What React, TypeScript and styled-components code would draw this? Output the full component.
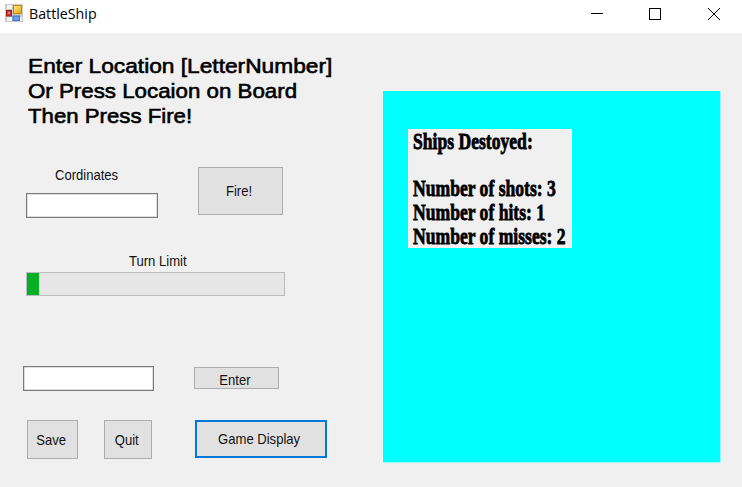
import React from "react";
import styled, { createGlobalStyle } from "styled-components";

const GlobalStyle = createGlobalStyle`
  * { box-sizing: border-box; }
  html, body { margin: 0; padding: 0; background: #f0f0f0; }
  button, input { font: inherit; border-radius: 0; margin: 0; padding: 0; }
`;

const Window = styled.div`
  width: 742px;
  height: 487px;
  display: flex;
  flex-direction: column;
  overflow: hidden;
  background: #f0f0f0;
  color: #111;
  font-family: "Liberation Sans", Arial, sans-serif;
  font-size: 15px;
  line-height: 17px;
`;

const TitleBar = styled.header`
  height: 33px;
  flex: none;
  display: flex;
  align-items: flex-start;
  background: #fff;
`;

const AppIcon = styled.svg`
  flex: none;
  margin: 4px 6px 0 5px;
`;

const Title = styled.span`
  flex: 1;
  margin-top: 4px;
  color: #000;
  font-family: "Open Sans", "Noto Sans", sans-serif;
  font-size: 14.3px;
  line-height: 20px;
  transform: scaleX(0.995);
  transform-origin: left;
`;

const Controls = styled.div`
  display: flex;
  flex: none;
`;

const ControlIcon = styled.svg`
  width: 58px;
  height: 28px;
  fill: none;
  stroke: #000;
`;

const Content = styled.main`
  display: flex;
  flex: 1;
`;

const ControlPanel = styled.section`
  width: 383px;
  flex: none;
  padding: 20px 0 0 23px;
`;

const Instructions = styled.h1`
  margin: 0 0 0 5px;
  color: #000;
  font-size: 20.5px;
  font-weight: 400;
  line-height: 25px;
  white-space: pre;
  -webkit-text-stroke: 0.6px #000;
`;

const InstructionLine = styled.span<{ $stretch: number }>`
  display: block;
  transform: scaleX(${(p) => p.$stretch});
  transform-origin: left;
`;

const Row = styled.div<{ $top: number; $indent?: number; $gap: number }>`
  display: flex;
  align-items: flex-start;
  gap: ${(p) => p.$gap}px;
  margin: ${(p) => p.$top}px 0 0 ${(p) => p.$indent ?? 0}px;
`;

const Field = styled.div`
  display: flex;
  flex-direction: column;
`;

const Caption = styled.span<{ $indent: number }>`
  margin-left: ${(p) => p.$indent}px;
  white-space: nowrap;
  transform: scaleX(0.87);
  transform-origin: left;
`;

const TextInput = styled.input<{ $w: number; $top?: number }>`
  display: block;
  width: ${(p) => p.$w}px;
  height: 25px;
  margin-top: ${(p) => p.$top ?? 0}px;
  background: #fff;
  border: 1px solid #7c7c7c;
  box-shadow: inset 0 0 0 0.5px #bbb;
  outline: none;
`;

const Button = styled.button<{ $w: number; $h: number; $top?: number; $focused?: boolean }>`
  display: flex;
  align-items: center;
  justify-content: center;
  width: ${(p) => p.$w}px;
  height: ${(p) => p.$h}px;
  margin-top: ${(p) => p.$top ?? 0}px;
  color: #111;
  background: #e1e1e1;
  border: ${(p) => (p.$focused ? "2px solid #0078d7" : "1px solid #adadad")};
`;

const ButtonLabel = styled.span<{ $shift?: number }>`
  white-space: nowrap;
  margin-top: ${(p) => p.$shift ?? 0}px;
  margin-right: 3px;
  transform: scaleX(0.87);
`;

const Progress = styled.div`
  width: 259px;
  height: 24px;
  margin: 3px 0 0 3px;
  background: #e6e6e6;
  border: 1px solid #bcbcbc;
`;

const ProgressFill = styled.div`
  width: 12px;
  height: 100%;
  background: #06b025;
`;

const Board = styled.section`
  width: 338px;
  height: 372px;
  margin-top: 58px;
  padding: 38px 0 0 25px;
  background: #00ffff;
  border: solid #a0f8f8;
  border-width: 0 1px 1px 0;
`;

const Stats = styled.div`
  width: 164px;
  height: 119px;
  padding-left: 5px;
  background: #f0f0f0;
`;

const StatLine = styled.div`
  height: 23.7px;
  color: #000;
  font-family: "Liberation Serif", "Times New Roman", serif;
  font-size: 24px;
  font-weight: 700;
  line-height: 24px;
  white-space: pre;
  -webkit-text-stroke: 0.8px #000;
  transform: scaleX(0.733);
  transform-origin: left;
`;

const stats = ["Ships Destoyed:", "", "Number of shots: 3", "Number of hits: 1", "Number of misses: 2"];

function FormIcon() {
  return (
    <AppIcon width="18" height="18" viewBox="0 0 18 18">
      <defs>
        <linearGradient id="gold" x2="1" y2="1">
          <stop stopColor="#ffe88a" />
          <stop offset="1" stopColor="#e5a800" />
        </linearGradient>
      </defs>
      <rect width="18" height="18" fill="#c9c9c9" />
      <path d="M2 1h5v4H2zM2 13h5v4H2zM15 13h2v4h-2z" fill="#f4f4f4" />
      <rect x="1.5" y="6.5" width="5" height="5.5" fill="#c43a32" stroke="#9d1e1a" />
      <rect x="3" y="8" width="2" height="2" fill="#e58378" />
      <rect x="8.5" y="1.5" width="8" height="8" fill="url(#gold)" stroke="#c58b0b" />
      <rect x="8" y="12" width="6.5" height="4.5" fill="#6aa0f2" stroke="#3c72cf" />
    </AppIcon>
  );
}

export default function App() {
  return (
    <>
      <GlobalStyle />
      <Window>
        <TitleBar>
          <FormIcon />
          <Title>BattleShip</Title>
          <Controls>
            <ControlIcon viewBox="0 0 58 28"><path d="M23 13.5h12" /></ControlIcon>
            <ControlIcon viewBox="0 0 58 28"><rect x="23.5" y="8.5" width="11" height="11" /></ControlIcon>
            <ControlIcon viewBox="0 0 58 28"><path d="M24 8l12 12M36 8L24 20" /></ControlIcon>
          </Controls>
        </TitleBar>
        <Content>
          <ControlPanel>
            <Instructions>
              <InstructionLine $stretch={1.108}>Enter Location [LetterNumber]</InstructionLine>
              <InstructionLine $stretch={1.088}>Or Press Locaion on Board</InstructionLine>
              <InstructionLine $stretch={1.083}>Then Press Fire!</InstructionLine>
            </Instructions>
            <Row $top={38} $indent={3} $gap={40}>
              <Field>
                <Caption $indent={29}>Cordinates</Caption>
                <TextInput $w={132} $top={10} />
              </Field>
              <Button $w={85} $h={48} $top={1}><ButtonLabel $shift={-1}>Fire!</ButtonLabel></Button>
            </Row>
            <Row $top={34} $gap={0}>
              <Field>
                <Caption $indent={106}>Turn Limit</Caption>
                <Progress><ProgressFill /></Progress>
              </Field>
            </Row>
            <Row $top={70} $gap={40}>
              <TextInput $w={131} />
              <Button $w={85} $h={22} $top={1}><ButtonLabel $shift={3}>Enter</ButtonLabel></Button>
            </Row>
            <Row $top={29} $indent={4} $gap={26}>
              <Button $w={51} $h={39}><ButtonLabel>Save</ButtonLabel></Button>
              <Button $w={48} $h={39}><ButtonLabel>Quit</ButtonLabel></Button>
              <Row $top={0} $indent={17} $gap={0}>
                <Button $w={132} $h={38} $focused><ButtonLabel $shift={-2}>Game Display</ButtonLabel></Button>
              </Row>
            </Row>
          </ControlPanel>
          <Board>
            <Stats>
              {stats.map((line, i) => <StatLine key={i}>{line}</StatLine>)}
            </Stats>
          </Board>
        </Content>
      </Window>
    </>
  );
}
